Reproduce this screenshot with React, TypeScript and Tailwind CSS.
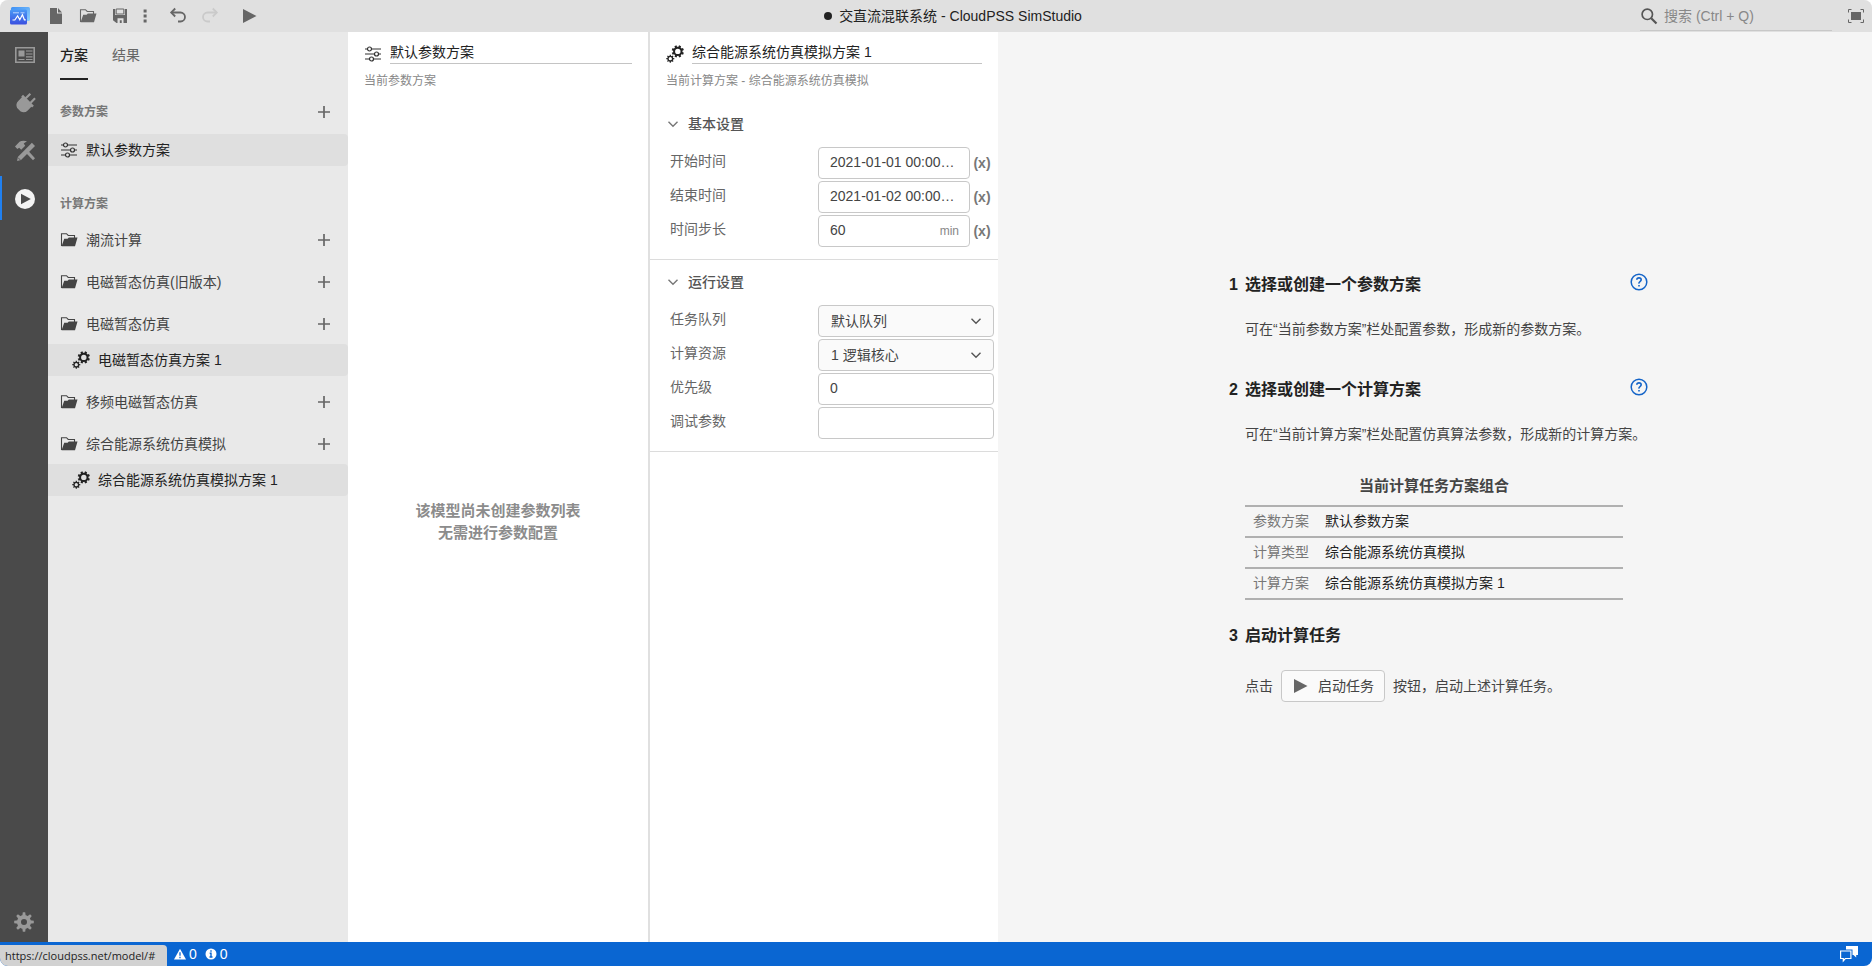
import React from 'react';

type IconProps = { className?: string };

const Svg = ({ className, size = 18, children }: IconProps & { size?: number; children: React.ReactNode }) => (
  <svg width={size} height={size} viewBox={`0 0 ${size} ${size}`} className={`shrink-0 ${className ?? ''}`} aria-hidden="true">
    {children}
  </svg>
);

const LogoIcon = () => (
  <svg width="20" height="18" viewBox="0 0 20 18" className="shrink-0" aria-hidden="true">
    <defs>
      <linearGradient id="logoBack" x1="0" y1="0" x2="1" y2="1">
        <stop offset="0" stopColor="#3d8ff5" />
        <stop offset="1" stopColor="#8fd0fc" />
      </linearGradient>
      <linearGradient id="logoFront" x1="0" y1="0" x2="0" y2="1">
        <stop offset="0" stopColor="#4a9af6" />
        <stop offset="1" stopColor="#3a4fe0" />
      </linearGradient>
    </defs>
    <rect x="1" y="0" width="19" height="14" rx="1.5" fill="url(#logoBack)" />
    <rect x="0" y="2.500" width="17" height="15" rx="1.5" fill="url(#logoFront)" />
    <path d="M2.500 13h2.300l2.800-4.200 2.200 4 2.600-5 2 5h1.400" fill="none" stroke="#fff" strokeWidth="1.200" />
    <path d="M3 5.800h6M10.500 5.800h4" fill="none" stroke="#c8deff" strokeWidth=".9" />
  </svg>
);

const FileIcon = () => (
  <Svg>
    <path d="M3 1h7v5.500h5V17H3z" fill="#666" />
    <path d="M11 1l4 4.500h-4z" fill="#666" />
  </Svg>
);

const FolderIcon = ({ className }: IconProps) => (
  <Svg className={className}>
    <path d="M1.5 15V2.7h5l1.7 1.8h6.3v2.6" fill="none" stroke="currentColor" strokeWidth="1.1" />
    <path d="M4.2 7.8h3.4l1.2-1.3h8.7L15 15.3H1.6z" fill="currentColor" />
  </Svg>
);

const SaveIcon = () => (
  <Svg>
    <path d="M2 2h2.2v6h9.6V2H16v14H5.5L2 13.3z" fill="#666" />
    <path d="M5.2 2h7.6v5H5.2z" fill="none" stroke="#666" strokeWidth="1" />
    <path d="M6.5 11.2h6V16h-1.8v-2.8H8.8V16H6.5z" fill="#e0e0e0" />
  </Svg>
);

const MoreIcon = () => (
  <Svg>
    <path d="M7.6 2.4h3v3h-3zM7.6 7.4h3v3h-3zM7.6 12.4h3v3h-3z" fill="#666" />
  </Svg>
);

const UndoIcon = ({ className }: IconProps) => (
  <Svg className={className}>
    <path d="M2.5 5.5h9a4.4 4.4 0 0 1 0 9H9" fill="none" stroke="currentColor" strokeWidth="1.8" />
    <path d="M6.2 1.5L2.2 5.5l4 4" fill="none" stroke="currentColor" strokeWidth="1.8" />
  </Svg>
);

const PlayIcon = () => (
  <Svg>
    <path d="M2 2l13.5 7L2 16z" fill="#666" />
  </Svg>
);

const SearchIcon = () => (
  <Svg>
    <circle cx="7.3" cy="7.3" r="5.2" fill="none" stroke="#555" strokeWidth="1.7" />
    <path d="M11.2 11.2l5.3 5.3" stroke="#555" strokeWidth="2.2" />
  </Svg>
);

const FullscreenIcon = () => (
  <Svg>
    <path d="M4 5h10v8H4z" fill="#666" />
    <path d="M1.5 5.5v-3h3M13.500 2.500h3v3M16.500 12.500v3h-3M4.500 15.500h-3v-3" fill="none" stroke="#666" strokeWidth="1" />
  </Svg>
);

const NewsIcon = () => (
  <Svg size={22}>
    <path d="M1.800 3.800h18.400v14.400H1.800z" fill="none" stroke="#999" strokeWidth="1.600" />
    <path d="M4.500 6.500h6v6h-6z" fill="#999" />
    <path d="M12 7h6.500M12 10h6.500M12 12.800h6.500M4.500 15.500h6M12 15.500h6.500" stroke="#999" strokeWidth="1.200" />
  </Svg>
);

const PlugIcon = () => (
  <Svg size={22}>
    <g fill="#999" transform="translate(-1.500 2.200) rotate(45 11 11)">
      <path d="M6.600-2h2.200v6.500H6.600zM13.200-2h2.200v6.500h-2.200z" />
      <path d="M3.300 4h15.400v2.600h-1v5.100q0 4.300-4.200 5.800H8.500q-4.200-1.500-4.200-5.800V6.600h-1z" />
    </g>
  </Svg>
);

const ToolsIcon = () => (
  <Svg size={22}>
    <path d="M3.100 20.900l.7-4L17.900 2.800l3.100 3.100L7 20z" fill="#999" />
    <path d="M4 17.600l2.400 2.400" stroke="#4a4a4a" strokeWidth=".8" />
    <path d="M1 6.500l4.500-4.700q2.500-1.500 7.500-.6L9.700 3.500l1.500 2.200-4 4-2-2-1.900 1.400z" fill="#999" />
    <path d="M12.500 13.500l2.200-2.200 6.300 6.900-2 2z" fill="#999" />
  </Svg>
);

const RunCircleIcon = () => (
  <Svg size={22}>
    <circle cx="11" cy="11" r="10" fill="#f3f3f3" />
    <path d="M7 5.800l9.800 5.200L7 16.200z" fill="#4a4a4a" />
  </Svg>
);

const TEETH = [0, 45, 90, 135, 180, 225, 270, 315];

const SettingsIcon = () => (
  <Svg size={22}>
    <g fill="#999">
      {TEETH.map((a) => (
        <path key={a} d="M9.300 5l.5-3.800h2.400l.5 3.800z" transform={`rotate(${a} 11 11)`} />
      ))}
    </g>
    <circle cx="11" cy="11" r="5" fill="none" stroke="#999" strokeWidth="4" />
  </Svg>
);

const GearsIcon = ({ className }: IconProps) => (
  <Svg className={className}>
    <circle cx="11.800" cy="6.400" r="3.700" fill="none" stroke="currentColor" strokeWidth="2" />
    {TEETH.map((a) => (
      <path key={a} d="M10.700 2.500V.3h2.200v2.200z" fill="currentColor" transform={`rotate(${a + 22} 11.800 6.400)`} />
    ))}
    <circle cx="4.300" cy="13.700" r="2.300" fill="none" stroke="currentColor" strokeWidth="1.300" />
    {TEETH.map((a) => (
      <path key={a} d="M3.700 11.300V9.700h1.200v1.600z" fill="currentColor" transform={`rotate(${a} 4.300 13.700)`} />
    ))}
  </Svg>
);

const SlidersIcon = () => (
  <Svg>
    <g fill="none" stroke="#333" strokeWidth="1.200">
      <path d="M1 4h2.500M7.500 4H17M1 9h9.500M14.500 9H17M1 14h4.500M9.500 14H17" />
      <circle cx="5.500" cy="4" r="2" />
      <circle cx="12.500" cy="9" r="2" />
      <circle cx="7.500" cy="14" r="2" />
    </g>
  </Svg>
);

const PlusIcon = () => (
  <Svg size={14}>
    <path d="M7 1v12M1 7h12" stroke="#666" strokeWidth="1.700" />
  </Svg>
);

const ChevronIcon = ({ className }: IconProps) => (
  <Svg size={12} className={className}>
    <path d="M1.500 3.700L6 8.200l4.500-4.500" fill="none" stroke="currentColor" strokeWidth="1.400" />
  </Svg>
);

const HelpIcon = () => (
  <Svg>
    <circle cx="9" cy="9" r="7.800" fill="none" stroke="#1464c8" strokeWidth="1.500" />
    <path d="M6.800 6.800Q6.900 4.900 9 4.900t2.200 1.900Q11.200 7.800 10 8.600T9 10.600" fill="none" stroke="#1464c8" strokeWidth="1.600" />
    <path d="M8.200 12h1.600v1.600H8.200z" fill="#1464c8" />
  </Svg>
);

const WarningIcon = () => (
  <Svg size={12}>
    <path d="M6 .8L12 11.500H0z" fill="#fff" />
    <path d="M6 4.300v3.500M6 8.800v1.400" stroke="#0a66d2" strokeWidth="1.300" />
  </Svg>
);

const InfoIcon = () => (
  <Svg size={12}>
    <circle cx="6" cy="6" r="5.500" fill="#fff" />
    <path d="M6 2.300v1.500M4.700 5.300H6v4M4.500 9h3" fill="none" stroke="#0a66d2" strokeWidth="1.400" />
  </Svg>
);

const ChatIcon = () => (
  <Svg>
    <path d="M6 1h12v9h-1.800v2.500L13.500 10h-1V4.500H6z" fill="#fff" />
    <path d="M.6 6h10.300v7.500H5.300l-2 2.400v-2.400H.6z" fill="none" stroke="#fff" strokeWidth="1.200" />
  </Svg>
);

const ToolButton = ({ label, className, children }: { label: string; className: string; children: React.ReactNode }) => (
  <button type="button" aria-label={label} className={`flex h-8 items-center justify-center ${className}`}>
    {children}
  </button>
);

const SectionHead = ({ title, className }: { title: string; className?: string }) => (
  <h2 className={`flex h-7 items-center pl-3 text-xs font-bold text-[#777] ${className ?? ''}`}>{title}</h2>
);

const AddButton = ({ label }: { label: string }) => (
  <button type="button" aria-label={`新建${label}`} className="ml-auto flex size-8 items-center justify-center">
    <PlusIcon />
  </button>
);

const Group = ({ name, plan }: { name: string; plan?: string }) => (
  <li className="pt-[2px]">
    <div className="flex h-10 items-center pl-3 pr-2 text-[#444]">
      <FolderIcon />
      <span className="ml-2">{name}</span>
      <AddButton label={name} />
    </div>
    {plan && (
      <button type="button" className="mb-1 flex h-8 w-full items-center rounded-r bg-[#dfdfdf] pl-6 text-left text-[#222]">
        <GearsIcon />
        <span className="ml-2">{plan}</span>
      </button>
    )}
  </li>
);

const Field = ({ id, label, children }: { id: string; label: string; children: React.ReactNode }) => (
  <div className="flex h-8 items-center pl-5 pr-1">
    <label htmlFor={id} className="flex-1 pb-1 text-[#666]">
      {label}
    </label>
    <div className="flex w-44 items-center">{children}</div>
  </div>
);

const boxClass = 'h-8 w-full min-w-0 rounded border border-[#c8c8c8] bg-white pb-[2px] pl-[11px] text-[#444] outline-none';

const VarButton = ({ label }: { label: string }) => (
  <button type="button" aria-label={`${label} 变量`} className="w-6 shrink-0 text-center font-bold text-[#777]">
    (x)
  </button>
);

const TextField = ({ id, label, value, unit, variable }: { id: string; label: string; value: string; unit?: string; variable?: boolean }) => (
  <Field id={id} label={label}>
    <div className="relative min-w-0 flex-1">
      <input id={id} defaultValue={value} className={`${boxClass} pr-3 text-ellipsis`} />
      {unit && <span className="absolute inset-y-0 right-[11px] flex items-center text-xs text-[#888]">{unit}</span>}
    </div>
    {variable && <VarButton label={label} />}
  </Field>
);

const SelectField = ({ id, label, value }: { id: string; label: string; value: string }) => (
  <Field id={id} label={label}>
    <div className="relative flex-1">
      <select id={id} className="h-8 w-full appearance-none rounded border border-[#c8c8c8] bg-[#fafafa] pl-3 text-[#444] outline-none">
        <option>{value}</option>
      </select>
      <ChevronIcon className="pointer-events-none absolute right-3 top-[10px] text-[#555]" />
    </div>
  </Field>
);

const SettingsGroup = ({ title, children }: { title: string; children: React.ReactNode }) => (
  <section className="border-b border-[#dcdcdc] pb-3">
    <h3>
      <button type="button" className="flex h-[45px] w-full items-center pb-[2px] pl-[17px] font-medium text-[#555]">
        <ChevronIcon className="text-[#777]" />
        <span className="ml-[9px]">{title}</span>
      </button>
    </h3>
    <div className="flex flex-col gap-[2px]">{children}</div>
  </section>
);

const PanelHead = ({ icon, name, note }: { icon: React.ReactNode; name: string; note: string }) => (
  <header className="h-[70px] pl-4 pr-4 pt-2">
    <div className="flex items-end">
      <div className="mb-[1px]">{icon}</div>
      <input
        aria-label={note}
        defaultValue={name}
        className="ml-2 h-6 min-w-0 flex-1 border-b border-[#c4c4c4] bg-transparent pb-[2px] text-[#222] outline-none"
      />
    </div>
    <p className="mt-2 text-xs leading-[18px] text-[#888]">{note}</p>
  </header>
);

const Step = ({ n, title, help, children }: { n: number; title: string; help?: boolean; children: React.ReactNode }) => (
  <li className="flex pl-[7px]">
    <span className="w-4 shrink-0 text-base leading-6 font-bold text-[#222]">{n}</span>
    <div className="flex-1">
      <div className="flex h-6 items-start justify-between">
        <h2 className="text-base leading-6 font-bold text-[#222]">{title}</h2>
        {help && (
          <a href="#help" aria-label="帮助">
            <HelpIcon />
          </a>
        )}
      </div>
      {children}
    </div>
  </li>
);

const SUMMARY = [
  ['参数方案', '默认参数方案'],
  ['计算类型', '综合能源系统仿真模拟'],
  ['计算方案', '综合能源系统仿真模拟方案 1'],
];

export default function App() {
  return (
    <div className="flex h-screen flex-col overflow-hidden rounded-lg bg-[#f5f5f5] font-['Liberation_Sans','Noto_Sans_CJK_SC',sans-serif] text-sm">
      <header className="flex h-8 shrink-0 items-center bg-[#e0e0e0]">
        <div className="flex items-center pl-[10px]">
          <LogoIcon />
          <ToolButton label="新建" className="ml-[10px] w-8"><FileIcon /></ToolButton>
          <ToolButton label="打开" className="w-8 text-[#666]"><FolderIcon /></ToolButton>
          <ToolButton label="保存" className="w-8"><SaveIcon /></ToolButton>
          <ToolButton label="更多" className="w-[18px]"><MoreIcon /></ToolButton>
          <ToolButton label="撤销" className="ml-2 w-8 text-[#666]"><UndoIcon /></ToolButton>
          <ToolButton label="重做" className="w-8 text-[#cacaca]"><UndoIcon className="-scale-x-100" /></ToolButton>
          <ToolButton label="运行" className="ml-2 w-8"><PlayIcon /></ToolButton>
        </div>
        <h1 className="flex flex-1 items-center justify-center text-[#222]">
          <span className="mr-[7px] size-2 rounded-full bg-[#222]" />
          交直流混联系统 - CloudPSS SimStudio
        </h1>
        <label className="mt-[1px] flex h-7 w-48 items-center border-b border-[#c8c8c8]">
          <SearchIcon />
          <input
            type="search"
            aria-label="搜索"
            placeholder="搜索 (Ctrl + Q)"
            className="ml-[6px] min-w-0 flex-1 bg-transparent outline-none placeholder:text-[#888]"
          />
        </label>
        <ToolButton label="全屏" className="ml-2 w-8"><FullscreenIcon /></ToolButton>
      </header>

      <div className="flex min-h-0 flex-1">
        <nav className="flex w-12 shrink-0 flex-col gap-1 bg-[#4a4a4a]">
          {[
            { label: '概览', icon: <NewsIcon /> },
            { label: '接口', icon: <PlugIcon /> },
            { label: '实现', icon: <ToolsIcon /> },
            { label: '运行', icon: <RunCircleIcon /> },
          ].map(({ label, icon }, i) => (
            <button
              key={label}
              type="button"
              aria-label={label}
              className={`flex h-11 items-center justify-center border-l-2 pt-[2px] ${i === 3 ? 'border-[#2080f0]' : 'border-transparent'}`}
            >
              {icon}
            </button>
          ))}
          <button type="button" aria-label="设置" className="mt-auto flex h-10 items-center justify-center">
            <SettingsIcon />
          </button>
        </nav>

        <aside className="w-[300px] shrink-0 bg-[#e9e9e9]">
          <div className="flex h-12 gap-6 pl-3">
            <button type="button" className="border-b-2 border-[#222] font-medium text-[#222]">方案</button>
            <button type="button" className="border-b-2 border-transparent text-[#666]">结果</button>
          </div>
          <div className="flex items-center pb-2 pr-2 pt-[18px]">
            <SectionHead title="参数方案" />
            <div className="-my-1 ml-auto flex"><AddButton label="参数方案" /></div>
          </div>
          <button type="button" className="flex h-8 w-full items-center rounded-r bg-[#dfdfdf] pl-3 text-left text-[#222]">
            <SlidersIcon />
            <span className="ml-2">默认参数方案</span>
          </button>
          <SectionHead title="计算方案" className="mt-6" />
          <ul>
            <Group name="潮流计算" />
            <Group name="电磁暂态仿真(旧版本)" />
            <Group name="电磁暂态仿真" plan="电磁暂态仿真方案 1" />
            <Group name="移频电磁暂态仿真" />
            <Group name="综合能源系统仿真模拟" plan="综合能源系统仿真模拟方案 1" />
          </ul>
        </aside>

        <section className="flex w-[302px] shrink-0 flex-col border-r-2 border-[#e0e0e0] bg-white">
          <PanelHead icon={<SlidersIcon />} name="默认参数方案" note="当前参数方案" />
          <p className="flex flex-1 flex-col items-center justify-center text-center text-[15px] leading-[22px] font-bold text-[#8c8c8c]">
            <span>该模型尚未创建参数列表</span>
            <span>无需进行参数配置</span>
          </p>
        </section>

        <section className="w-[348px] shrink-0 bg-white">
          <PanelHead icon={<GearsIcon className="text-[#222]" />} name="综合能源系统仿真模拟方案 1" note="当前计算方案 - 综合能源系统仿真模拟" />
          <SettingsGroup title="基本设置">
            <TextField id="start" label="开始时间" value="2021-01-01 00:00:00" variable />
            <TextField id="end" label="结束时间" value="2021-01-02 00:00:00" variable />
            <TextField id="step" label="时间步长" value="60" unit="min" variable />
          </SettingsGroup>
          <SettingsGroup title="运行设置">
            <SelectField id="queue" label="任务队列" value="默认队列" />
            <SelectField id="cores" label="计算资源" value="1 逻辑核心" />
            <TextField id="priority" label="优先级" value="0" />
            <TextField id="debug" label="调试参数" value="" />
          </SettingsGroup>
        </section>

        <main className="flex min-w-0 flex-1 flex-col items-center justify-center text-[#444]">
          <ol className="w-[426px]">
            <Step n={1} title="选择或创建一个参数方案" help>
              <p className="mt-5 leading-6 whitespace-nowrap">可在“当前参数方案”栏处配置参数，形成新的参数方案。</p>
            </Step>
            <li className="h-[37px]" aria-hidden="true" />
            <Step n={2} title="选择或创建一个计算方案" help>
              <p className="mt-5 leading-6 whitespace-nowrap">可在“当前计算方案”栏处配置仿真算法参数，形成新的计算方案。</p>
              <table className="mt-7 w-[378px] border-collapse">
                <caption className="pb-[7px] text-[15px] leading-6 font-bold text-[#444]">当前计算任务方案组合</caption>
                <tbody>
                  {SUMMARY.map(([k, v]) => (
                    <tr key={k} className="h-[31px] border-y-2 border-[#b0b0b0]">
                      <th scope="row" className="w-20 pl-2 text-left font-normal text-[#777]">{k}</th>
                      <td className="text-[#222]">{v}</td>
                    </tr>
                  ))}
                </tbody>
              </table>
            </Step>
            <li className="h-6" aria-hidden="true" />
            <Step n={3} title="启动计算任务">
              <div className="mt-[22px] flex items-center">
                点击
                <button type="button" className="mx-2 flex h-8 items-center rounded border border-[#c8c8c8] bg-[#fafafa] px-[10px]">
                  <PlayIcon />
                  <span className="ml-2">启动任务</span>
                </button>
                按钮，启动上述计算任务。
              </div>
            </Step>
          </ol>
        </main>
      </div>

      <footer className="relative flex h-6 shrink-0 items-center bg-[#0a66d2] pl-[174px] pr-[14px] text-white">
        <button type="button" aria-label="警告 0" className="flex items-center gap-[3px]">
          <WarningIcon />0
        </button>
        <button type="button" aria-label="信息 0" className="ml-2 flex items-center gap-[3px]">
          <InfoIcon />0
        </button>
        <button type="button" aria-label="反馈" className="ml-auto">
          <ChatIcon />
        </button>
        <div className="absolute bottom-0 left-0 flex h-[21px] w-[167px] items-center rounded-tr bg-[#d2d2d2] pl-[5px] font-['Open_Sans',sans-serif] text-[11px] whitespace-nowrap text-[#222]">
          https://cloudpss.net/model/#
        </div>
      </footer>
    </div>
  );
}
